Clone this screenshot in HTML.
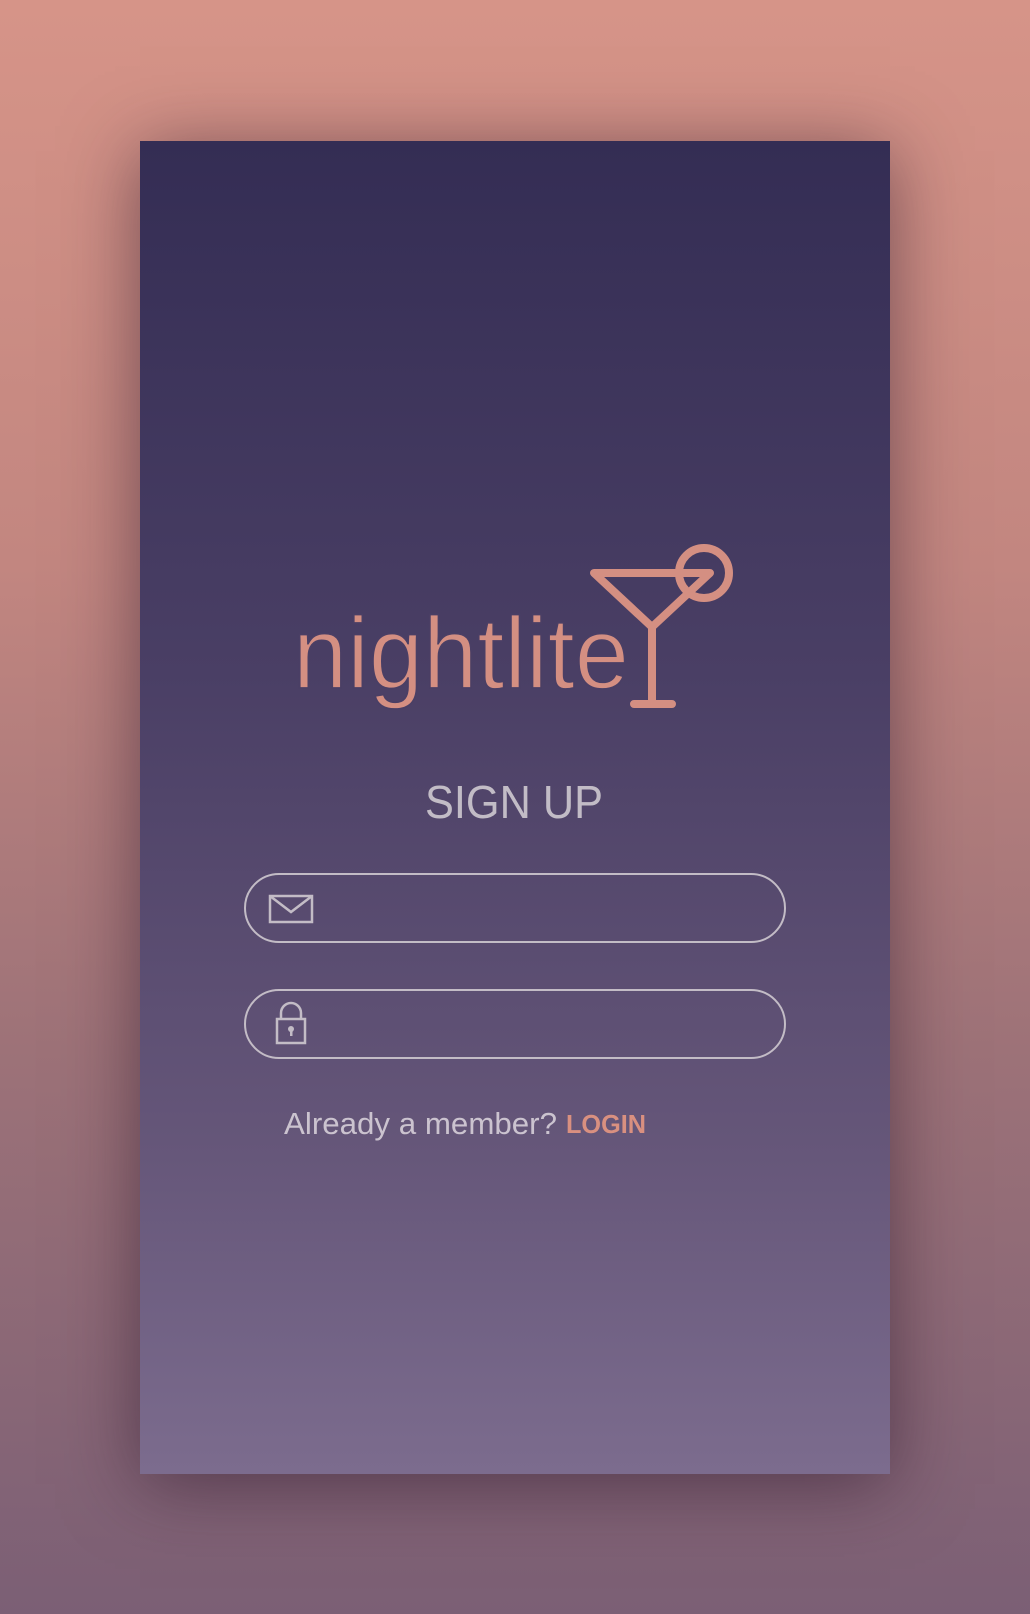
<!DOCTYPE html>
<html><head><meta charset="utf-8"><style>
html,body{margin:0;padding:0}
body{width:1030px;height:1614px;position:relative;overflow:hidden;background:linear-gradient(180deg,#d69488 0%,#c28680 35%,#9d7278 65%,#7b5f75 100%);font-family:"Liberation Sans",sans-serif}
.card{position:absolute;left:140px;top:141px;width:750px;height:1333px;background:linear-gradient(180deg,#342d54 0%,#4a3f65 40%,#655679 75%,#7c6c8e 100%);box-shadow:0 10px 70px rgba(40,20,40,0.55)}
.inp{position:absolute;left:244px;width:542px;height:70px;border:2px solid #c3bcc6;border-radius:36px;box-sizing:border-box}
</style></head><body>
<div class="card"></div>
<svg width="1030" height="1614" style="position:absolute;left:0;top:0">
<text x="293" y="688" font-family="Liberation Sans, sans-serif" font-size="88" fill="#d48f82" stroke="#4a3f65" stroke-width="1.5" textLength="336" lengthAdjust="spacingAndGlyphs" transform="translate(0,-103) scale(1,1.15)">nightlite</text>
<g fill="none" stroke="#d48f82" stroke-width="8" stroke-linecap="round" stroke-linejoin="round">
<path d="M594 573 L710 573 L652 627 Z"/>
<path d="M652 627 L652 703 M634 704 L672 704"/>
<circle cx="704" cy="573" r="25"/>
</g>
<text x="514" y="818" text-anchor="middle" font-size="46" fill="#c2bcc6" font-family="Liberation Sans, sans-serif" textLength="178" lengthAdjust="spacingAndGlyphs">SIGN UP</text>
<g fill="none" stroke="#c3bcc6" stroke-width="2.5">
<rect x="270" y="896" width="42" height="26"/>
<path d="M270 896 L291 912 L312 896"/>
<rect x="277" y="1019" width="28" height="24"/>
<path d="M281 1019 V1013 a10 10 0 0 1 20 0 V1019"/>
</g>
<circle cx="291" cy="1029" r="3" fill="#c3bcc6"/>
<rect x="290" y="1030" width="2.5" height="6" fill="#c3bcc6"/>
<text x="284" y="1134" font-size="31" fill="#cbc3cf" font-family="Liberation Sans, sans-serif" textLength="273" lengthAdjust="spacingAndGlyphs">Already  a  member?</text>
<text x="566" y="1133" font-size="26" fill="#d99080" font-weight="bold" font-family="Liberation Sans, sans-serif" textLength="80" lengthAdjust="spacingAndGlyphs">LOGIN</text>
</svg>
<div class="inp" style="top:873px"></div>
<div class="inp" style="top:989px"></div>
</body></html>
